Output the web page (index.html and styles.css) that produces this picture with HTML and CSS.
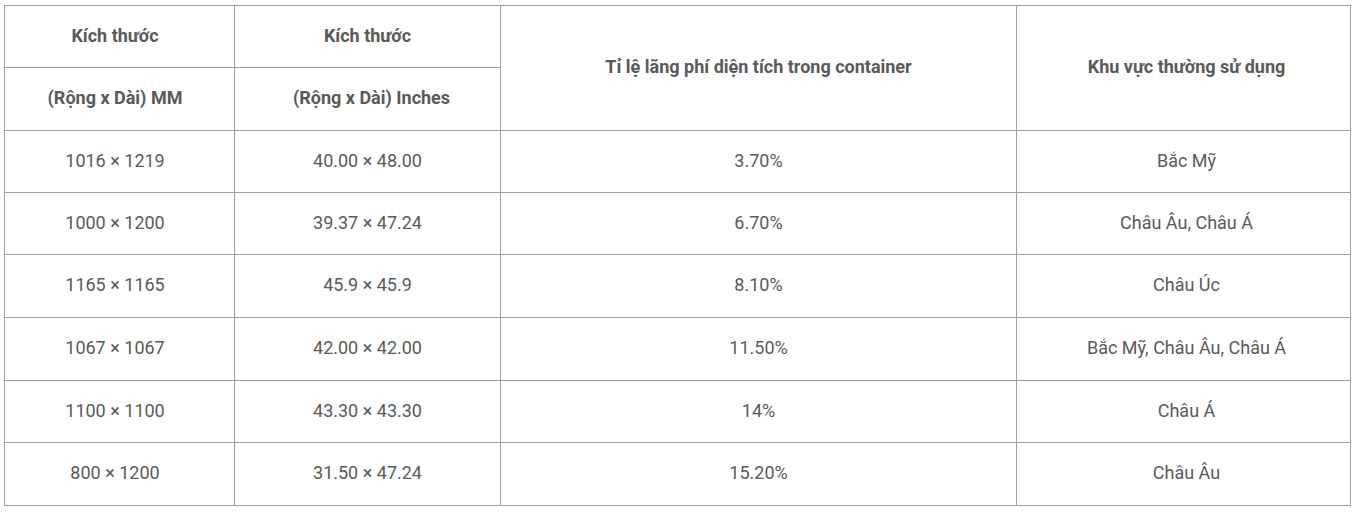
FILE: index.html
```html
<!DOCTYPE html>
<html lang="vi">
<head>
<meta charset="utf-8">
<link rel="stylesheet" href="styles.css">
</head>
<body>
<table class="sizes">
  <colgroup>
    <col class="c1"><col class="c2"><col class="c3"><col class="c4">
  </colgroup>
  <thead>
    <tr class="r62">
      <th class="first">Kích thước</th>
      <th>Kích thước</th>
      <th rowspan="2">Tỉ lệ lãng phí diện tích trong container</th>
      <th rowspan="2" class="last">Khu vực thường sử dụng</th>
    </tr>
    <tr class="r63">
      <th class="first">(Rộng x Dài) MM</th>
      <th class="inch">(Rộng x Dài) Inches</th>
    </tr>
  </thead>
  <tbody>
    <tr class="r62"><td class="first">1016 × 1219</td><td>40.00 × 48.00</td><td>3.70%</td><td class="last">Bắc Mỹ</td></tr>
    <tr class="r62"><td class="first">1000 × 1200</td><td>39.37 × 47.24</td><td>6.70%</td><td class="last">Châu Âu, Châu Á</td></tr>
    <tr class="r63"><td class="first">1165 × 1165</td><td>45.9 × 45.9</td><td>8.10%</td><td class="last">Châu Úc</td></tr>
    <tr class="r63"><td class="first">1067 × 1067</td><td>42.00 × 42.00</td><td>11.50%</td><td class="last">Bắc Mỹ, Châu Âu, Châu Á</td></tr>
    <tr class="r62"><td class="first">1100 × 1100</td><td>43.30 × 43.30</td><td>14%</td><td class="last">Châu Á</td></tr>
    <tr class="r63"><td class="first">800 × 1200</td><td>31.50 × 47.24</td><td>15.20%</td><td class="last">Châu Âu</td></tr>
  </tbody>
</table>
</body>
</html>
```

FILE: styles.css
```css
html, body {
  margin: 0;
  background: #ffffff;
}
body {
  padding: 5px 0 0 4px;
  font-family: Roboto, "Liberation Sans", sans-serif;
  font-size: 18px;
  color: #5a5a5a;
}
.sizes {
  border-collapse: collapse;
  table-layout: fixed;
  width: 1346px;
}
.c1 { width: 230px; }
.c2 { width: 266px; }
.c3 { width: 516px; }
.c4 { width: 334px; }
.sizes th,
.sizes td {
  border: 1px solid #a0a0a0;
  text-align: center;
  vertical-align: middle;
  padding: 0 8px 2px;
  line-height: 26px;
}
.sizes .first {
  padding: 0 17px 2px 8px;
}
.sizes .inch {
  padding: 0 8px 2px 16px;
}
.sizes .last {
  padding: 0 8px 2px 14px;
}
.sizes th {
  font-weight: 700;
}
.sizes td {
  font-weight: 400;
}
.r62 { height: 62px; }
.r63 { height: 63px; }
```
